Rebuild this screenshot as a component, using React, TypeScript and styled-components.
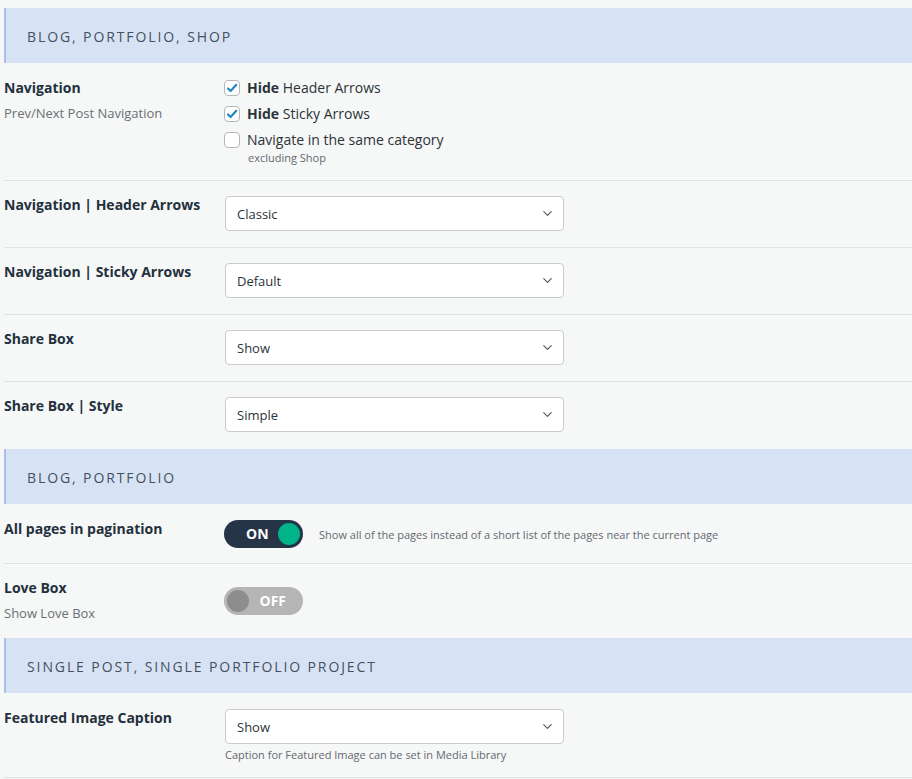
import styled, { createGlobalStyle } from 'styled-components';
import { ChevronDown } from 'lucide-react';

const GlobalStyle = createGlobalStyle`
  html, body {
    margin: 0;
    padding: 0;
    background: #f6f7f7;
    font-family: "Open Sans", "Liberation Sans", sans-serif;
    color: #1d2327;
    overflow: hidden;
  }
`;

type CheckItem = { bold?: string; text: string; checked: boolean; note?: string };

const navItems: CheckItem[] = [
  { bold: 'Hide', text: 'Header Arrows', checked: true },
  { bold: 'Hide', text: 'Sticky Arrows', checked: true },
  { text: 'Navigate in the same category', checked: false, note: 'excluding Shop' },
];

function Check({ checked }: { checked: boolean }) {
  return (
    <Box>
      {checked && (
        <svg width="12" height="12" viewBox="0 0 12 12">
          <path d="M2 6.4l2.6 2.6L10.3 2.8" fill="none" stroke="#1e85c2" strokeWidth="2.1" strokeLinecap="round" strokeLinejoin="round" />
        </svg>
      )}
    </Box>
  );
}

function Select({ value }: { value: string }) {
  return (
    <SelectBox>
      <span>{value}</span>
      <ChevronDown size={15} strokeWidth={1.8} color="#50575e" />
    </SelectBox>
  );
}

function Toggle({ on }: { on: boolean }) {
  return (
    <Switch on={on}>
      {on ? (
        <>
          <SwitchText>ON</SwitchText>
          <Knob on={on} />
        </>
      ) : (
        <>
          <Knob on={on} />
          <SwitchText>OFF</SwitchText>
        </>
      )}
    </Switch>
  );
}

export default function App() {
  return (
    <>
      <GlobalStyle />
      <Page>
        <SectionHeader>Blog, Portfolio, Shop</SectionHeader>
        <Row>
          <LabelCol first>
            <Label>Navigation</Label>
            <Desc>Prev/Next Post Navigation</Desc>
          </LabelCol>
          <CheckList>
            {navItems.map((item) => (
              <div key={item.text}>
                <CheckRow>
                  <Check checked={item.checked} />
                  <span>
                    {item.bold && <b>{item.bold} </b>}
                    {item.text}
                  </span>
                </CheckRow>
                {item.note && <CheckNote>{item.note}</CheckNote>}
              </div>
            ))}
          </CheckList>
        </Row>
        <Row>
          <LabelCol>
            <Label>Navigation | Header Arrows</Label>
          </LabelCol>
          <Control>
            <Select value="Classic" />
          </Control>
        </Row>
        <Row>
          <LabelCol>
            <Label>Navigation | Sticky Arrows</Label>
          </LabelCol>
          <Control>
            <Select value="Default" />
          </Control>
        </Row>
        <Row>
          <LabelCol>
            <Label>Share Box</Label>
          </LabelCol>
          <Control>
            <Select value="Show" />
          </Control>
        </Row>
        <Row last>
          <LabelCol>
            <Label>Share Box | Style</Label>
          </LabelCol>
          <Control>
            <Select value="Simple" />
          </Control>
        </Row>

        <SectionHeader>Blog, Portfolio</SectionHeader>
        <Row>
          <LabelCol first>
            <Label>All pages in pagination</Label>
          </LabelCol>
          <ToggleControl>
            <Toggle on />
            <Hint>Show all of the pages instead of a short list of the pages near the current page</Hint>
          </ToggleControl>
        </Row>
        <Row last>
          <LabelCol>
            <Label>Love Box</Label>
            <Desc>Show Love Box</Desc>
          </LabelCol>
          <ToggleControl>
            <Toggle on={false} />
          </ToggleControl>
        </Row>

        <SectionHeader>Single Post, Single Portfolio Project</SectionHeader>
        <Row>
          <LabelCol first>
            <Label>Featured Image Caption</Label>
          </LabelCol>
          <Control first>
            <Select value="Show" />
            <Caption>Caption for Featured Image can be set in Media Library</Caption>
          </Control>
        </Row>
      </Page>
    </>
  );
}

const Page = styled.div`
  padding: 8px 0 0 4px;
  width: 1000px;
`;

const SectionHeader = styled.h3`
  margin: 0;
  height: 55px;
  display: flex;
  align-items: center;
  padding: 2px 0 0 21px;
  box-sizing: border-box;
  background: #d7e3f4;
  border-left: 2px solid #a7c0e3;
  color: #44515f;
  font-size: 14px;
  font-weight: 400;
  letter-spacing: 1.9px;
  text-transform: uppercase;
`;

const Row = styled.div<{ last?: boolean }>`
  display: flex;
  border-bottom: 1px solid ${({ last }) => (last ? 'transparent' : '#e0e2e4')};
`;

const LabelCol = styled.div<{ first?: boolean }>`
  width: 221px;
  flex-shrink: 0;
  padding: ${({ first }) => (first ? '16px' : '15px')} 0 15px;
`;

const Label = styled.div`
  font-size: 14px;
  font-weight: 700;
  line-height: 18px;
  color: #23303d;
`;

const Desc = styled.div`
  margin-top: 7px;
  font-size: 13px;
  line-height: 18px;
  color: #6b7075;
`;

const CheckList = styled.div`
  padding: 16px 0 15px;
  display: flex;
  flex-direction: column;
  gap: 8px;
`;

const CheckRow = styled.label`
  display: flex;
  align-items: center;
  gap: 7px;
  font-size: 14px;
  line-height: 18px;
  color: #2c3338;

  b {
    font-weight: 700;
  }
`;

const Box = styled.span`
  width: 16px;
  height: 16px;
  box-sizing: border-box;
  border: 1px solid #b4b7ba;
  border-radius: 4px;
  background: #fff;
  display: flex;
  align-items: center;
  justify-content: center;
  margin-left: -1px;
`;

const CheckNote = styled.div`
  margin: 2px 0 0 23px;
  font-size: 11px;
  line-height: 14px;
  color: #646970;
`;

const Control = styled.div<{ first?: boolean }>`
  padding: ${({ first }) => (first ? '16px 0 15px' : '15px 0 16px')};
  display: flex;
  flex-direction: column;
`;

const SelectBox = styled.div`
  width: 339px;
  height: 35px;
  box-sizing: border-box;
  border: 1px solid #c9cbcd;
  border-radius: 4px;
  background: #fff;
  display: flex;
  align-items: center;
  justify-content: space-between;
  padding: 0 8px 0 11px;
  font-size: 13px;
  color: #2c3338;
`;

const Caption = styled.div`
  margin-top: 4px;
  font-size: 11px;
  line-height: 14px;
  color: #646970;
`;

const ToggleControl = styled.div`
  display: flex;
  align-items: center;
  gap: 16px;
  margin-left: -1px;
  padding: 16px 0 15px;
`;

const Switch = styled.div<{ on: boolean }>`
  width: 79px;
  height: 28px;
  box-sizing: border-box;
  border-radius: 14px;
  background: ${({ on }) => (on ? '#253447' : '#b5b5b5')};
  display: flex;
  align-items: center;
  justify-content: space-between;
  padding: ${({ on }) => (on ? '0 3px 0 22px' : '0 17px 0 3px')};
`;

const SwitchText = styled.span`
  color: #fff;
  font-size: 14px;
  font-weight: 700;
  line-height: 1;
`;

const Knob = styled.span<{ on: boolean }>`
  width: 22px;
  height: 22px;
  border-radius: 50%;
  background: ${({ on }) => (on ? '#00b389' : '#8d8d8d')};
`;

const Hint = styled.span`
  font-size: 11px;
  color: #646970;
`;
